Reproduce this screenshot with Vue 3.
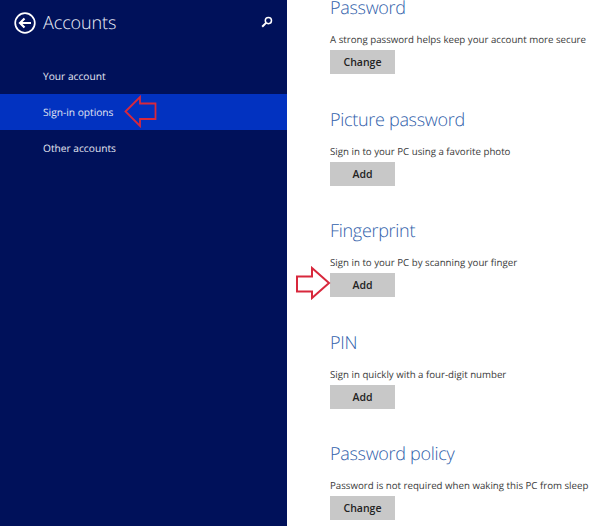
<script setup>
const navItems = [
  { label: 'Your account', active: false },
  { label: 'Sign-in options', active: true },
  { label: 'Other accounts', active: false },
]
const sections = [
  { title: 'Password', text: 'A strong password helps keep your account more secure', action: 'Change' },
  { title: 'Picture password', text: 'Sign in to your PC using a favorite photo', action: 'Add' },
  { title: 'Fingerprint', text: 'Sign in to your PC by scanning your finger', action: 'Add' },
  { title: 'PIN', text: 'Sign in quickly with a four-digit number', action: 'Add' },
  { title: 'Password policy', text: 'Password is not required when waking this PC from sleep', action: 'Change' },
]
</script>

<template>
  <div class="page">
    <aside class="sidebar">
      <header class="head">
        <svg class="back" width="22" height="22" viewBox="0 0 22 22" fill="none" stroke="#fff">
          <circle cx="11" cy="11" r="9.8" stroke-width="1.7" />
          <path d="M17 11H6M10.5 6.5 6 11l4.5 4.5" stroke-width="2.2" />
        </svg>
        <h1>Accounts</h1>
        <svg class="search" width="12" height="12" viewBox="0 0 12 12" fill="none" stroke="#fff">
          <circle cx="7.4" cy="4.6" r="3.1" stroke-width="1.5" />
          <path d="M5.1 6.9 1.2 10.8" stroke-width="2" />
        </svg>
      </header>
      <nav class="nav">
        <div v-for="item in navItems" :key="item.label" class="nav-item" :class="{ active: item.active }">
          {{ item.label }}
        </div>
      </nav>
    </aside>
    <main class="content">
      <section v-for="s in sections" :key="s.title" class="section">
        <h2>{{ s.title }}</h2>
        <p>{{ s.text }}</p>
        <button type="button">{{ s.action }}</button>
      </section>
    </main>
    <svg class="arrow arrow-left" width="33" height="33" viewBox="0 0 33 33" fill="none" stroke="#d8283c" stroke-width="1.8">
      <path d="M1.5 16.5 16 2v6.5h15.5v15.5H16v7z" />
    </svg>
    <svg class="arrow arrow-right" width="36" height="34" viewBox="0 0 36 34" fill="#fff" stroke="#d8283c" stroke-width="2">
      <path d="M34 17 17 2v8.5H2v15h15V32z" />
    </svg>
  </div>
</template>

<style>
html, body { margin: 0; background: #fff; }
</style>

<style scoped>
.page {
  position: relative;
  display: flex;
  width: 600px;
  height: 526px;
  overflow: hidden;
  background: #fff;
  font-family: "Open Sans", "Noto Sans", sans-serif;
  text-rendering: geometricPrecision;
}
.sidebar {
  width: 287px;
  flex: none;
  background: #00115a;
  color: #fff;
}
.head {
  display: flex;
  align-items: center;
  height: 46px;
  padding: 0 14px;
}
.back { flex: none; }
h1 {
  flex: 1;
  margin: 0 0 0 7px;
  font-size: 18px;
  font-weight: 300;
  line-height: 46px;
  letter-spacing: -0.1px;
  color: #eef0f8;
}
.search { flex: none; margin: 0 0 2px; }
.nav { margin-top: 12px; }
.nav-item {
  height: 36px;
  padding-left: 43px;
  font-size: 10.2px;
  line-height: 36px;
  color: #e4e7f2;
}
.nav-item.active {
  background: #0232c0;
}
.content {
  flex: 1;
  padding: 0 0 0 43px;
  margin-top: -5px;
}
.section { height: 111.5px; }
h2 {
  margin: 0;
  font-size: 18px;
  font-weight: 300;
  line-height: 26px;
  letter-spacing: -0.3px;
  color: #2f60aa;
}
p {
  margin: 11px 0 0;
  font-size: 9.7px;
  line-height: 15px;
  white-space: nowrap;
  color: #3a3a3a;
}
button {
  display: block;
  width: 65px;
  height: 24px;
  margin-top: 3px;
  padding: 0;
  border: 0;
  background: #c8c8c8;
  font: 600 10.5px "Open Sans", "Noto Sans", sans-serif;
  color: #222;
}
.arrow { position: absolute; }
.arrow-left { left: 124px; top: 95px; }
.arrow-right { left: 295px; top: 266px; }
</style>
